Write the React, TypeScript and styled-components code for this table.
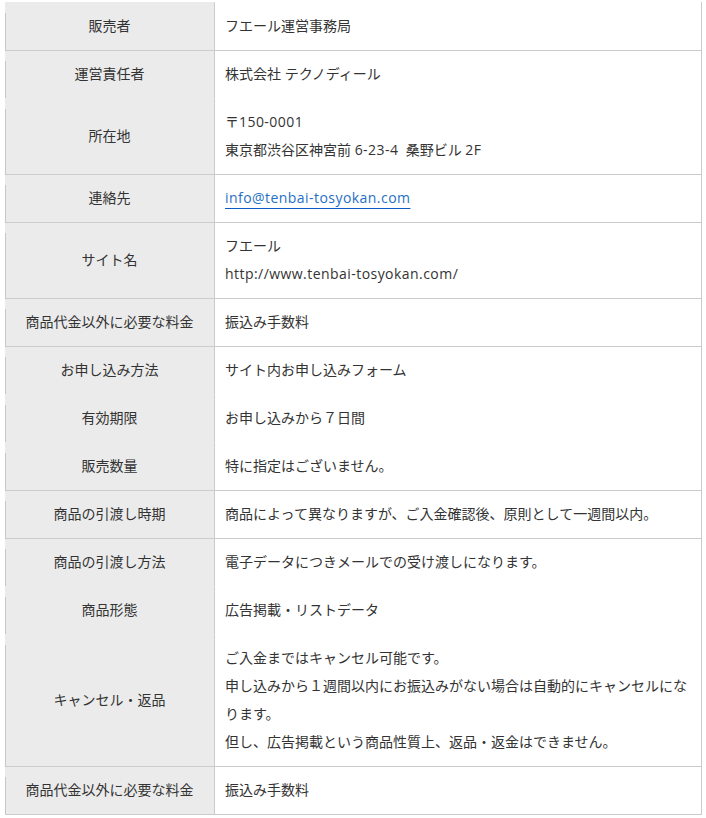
import { Fragment } from 'react'
import { styled, createGlobalStyle } from 'styled-components'

interface Row {
  label: string
  lines: string[]
  joined?: boolean
  link?: boolean
}

const rows: Row[] = [
  { label: '販売者', lines: ['フエール運営事務局'] },
  { label: '運営責任者', lines: ['株式会社 テクノディール'] },
  {
    label: '所在地',
    lines: ['〒150-0001', '東京都渋谷区神宮前 6-23-4  桑野ビル 2F'],
    joined: true,
  },
  { label: '連絡先', lines: ['info@tenbai-tosyokan.com'], link: true },
  { label: 'サイト名', lines: ['フエール', 'http://www.tenbai-tosyokan.com/'] },
  { label: '商品代金以外に必要な料金', lines: ['振込み手数料'] },
  { label: 'お申し込み方法', lines: ['サイト内お申し込みフォーム'] },
  { label: '有効期限', lines: ['お申し込みから７日間'], joined: true },
  { label: '販売数量', lines: ['特に指定はございません。'], joined: true },
  {
    label: '商品の引渡し時期',
    lines: ['商品によって異なりますが、ご入金確認後、原則として一週間以内。'],
  },
  {
    label: '商品の引渡し方法',
    lines: ['電子データにつきメールでの受け渡しになります。'],
  },
  { label: '商品形態', lines: ['広告掲載・リストデータ'], joined: true },
  {
    label: 'キャンセル・返品',
    lines: [
      'ご入金まではキャンセル可能です。',
      '申し込みから１週間以内にお振込みがない場合は自動的にキャンセルにな',
      'ります。',
      '但し、広告掲載という商品性質上、返品・返金はできません。',
    ],
    joined: true,
  },
  { label: '商品代金以外に必要な料金', lines: ['振込み手数料'] },
]

// ascii runs get a little extra tracking so they run as wide as the original
function renderText(text: string) {
  return text
    .split(/([\x21-\x7e](?:[\x20-\x7e]*[\x21-\x7e])?)/)
    .map((part, i) => (i % 2 === 1 ? <Latin key={i}>{part}</Latin> : part))
}

export default function App() {
  return (
    <>
      <GlobalStyle />
      <Table>
        <tbody>
          {rows.map((row, i) => (
            <tr key={i}>
              <Head $joined={row.joined || i === 0}>{row.label}</Head>
              <Cell $joined={row.joined || i === 0}>
                {row.lines.map((line, j) => (
                  <Fragment key={j}>
                    {j > 0 && <br />}
                    {row.link ? (
                      <MailLink href={`mailto:${line}`}>{renderText(line)}</MailLink>
                    ) : (
                      renderText(line)
                    )}
                  </Fragment>
                ))}
              </Cell>
            </tr>
          ))}
        </tbody>
      </Table>
    </>
  )
}

/** style */

const GlobalStyle = createGlobalStyle`
  body {
    margin: 0;
    background: #fff;
    font-family: "Open Sans", "Noto Sans CJK JP", sans-serif;
    color: #333;
  }
`

const Table = styled.table`
  margin: 2px 0 0 5px;
  width: 697px;
  border-collapse: separate;
  border-spacing: 0;
  border-right: 1px solid #cbcbcb;
  border-bottom: 1px solid #cbcbcb;
  font-size: 14px;
  line-height: 28px;
`

const Head = styled.th<{ $joined?: boolean }>`
  position: relative;
  box-sizing: border-box;
  width: 210px;
  padding: 9px 8px 10px;
  background: #ebebeb;
  border-top: 1px solid ${(p) => (p.$joined ? '#ebebeb' : '#cbcbcb')};
  border-right: 1px solid #cbcbcb;
  font-weight: normal;
  text-align: center;
  vertical-align: middle;
  white-space: nowrap;

  &::before {
    content: '';
    position: absolute;
    left: 0;
    top: 10px;
    bottom: 0;
    width: 1px;
    background: #c6c6c6;
  }
`

const Cell = styled.td<{ $joined?: boolean }>`
  padding: 9px 10px 10px;
  background: #fff;
  border-top: 1px solid ${(p) => (p.$joined ? '#fff' : '#cbcbcb')};
  text-align: left;
  vertical-align: middle;
  white-space: pre;
`

const Latin = styled.span`
  letter-spacing: 0.45px;
`

const MailLink = styled.a`
  color: #1f6fc6;
  text-decoration: underline;
  text-decoration-color: #0a5cc4;
  text-underline-offset: 5px;
`
